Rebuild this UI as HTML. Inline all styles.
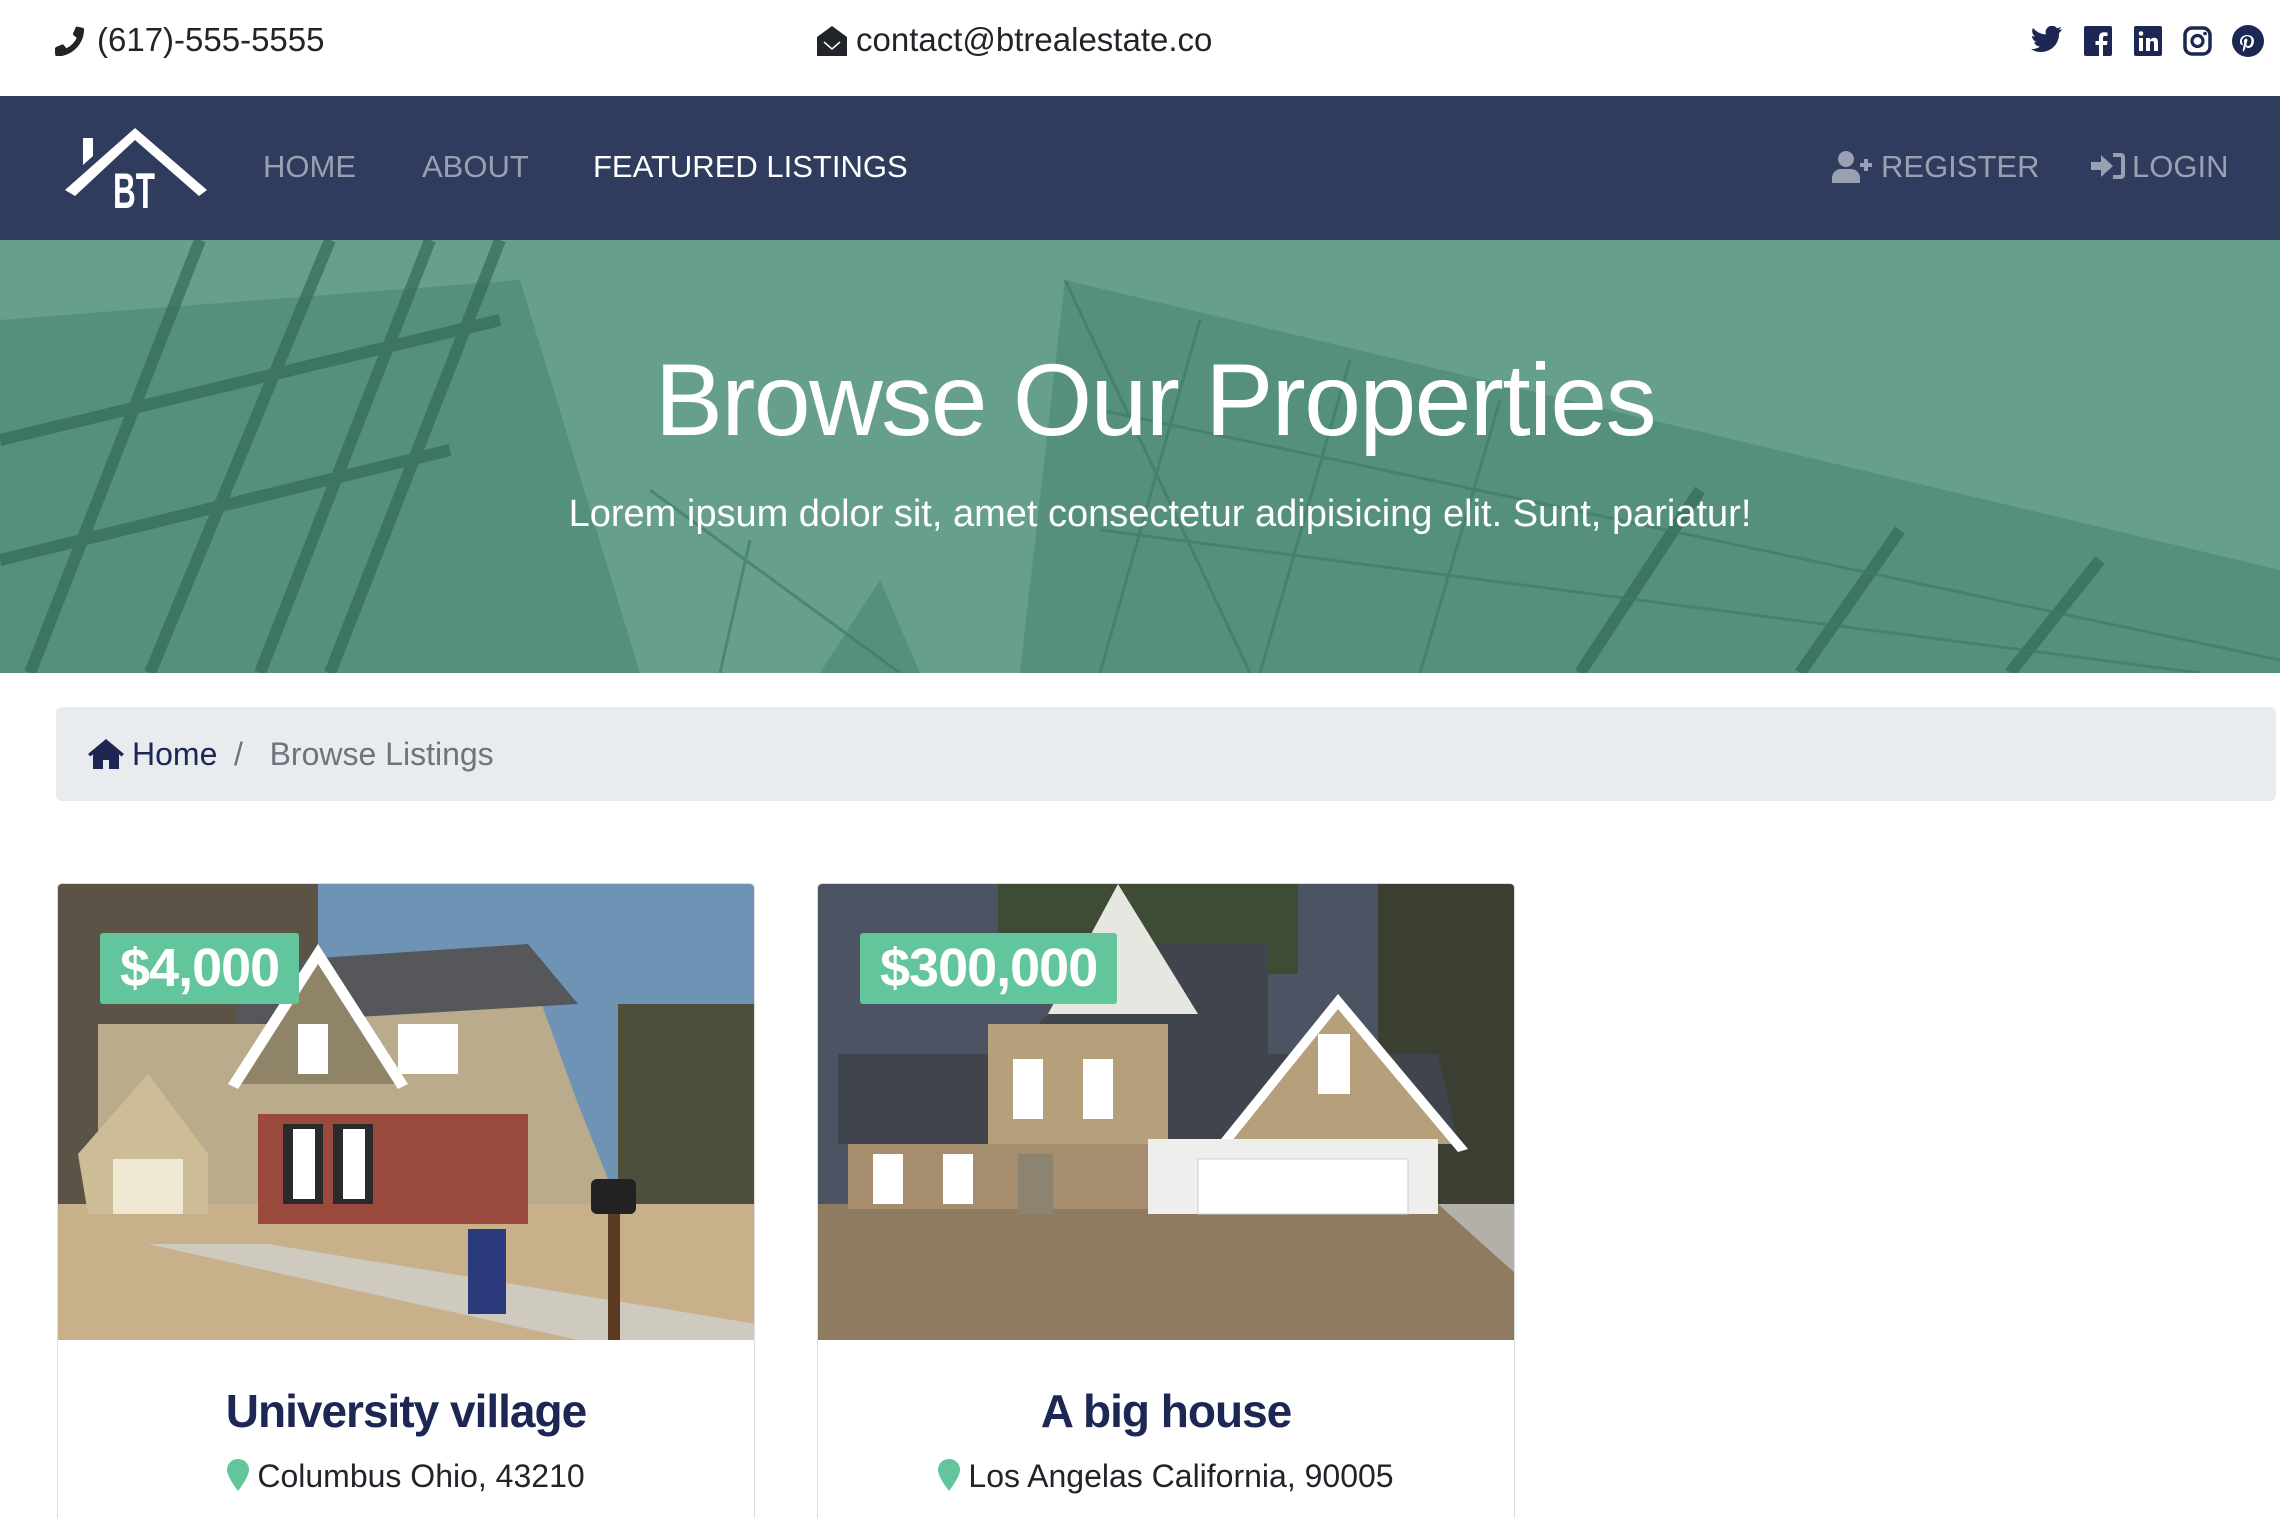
<!DOCTYPE html>
<html><head><meta charset="utf-8">
<style>
*{margin:0;padding:0;box-sizing:border-box}
html{width:2280px;height:1518px;overflow:hidden}
body{width:2280px;height:1518px;overflow:hidden;background:#fff;font-family:"Liberation Sans",sans-serif;color:#212529;position:relative}
.abs{position:absolute}
.top{height:96px;top:0;left:0;width:2280px}
.top .t{font-size:33px;top:21px;color:#212529}
.nav{top:96px;left:0;width:2280px;height:144px;background:#2f3c5e}
.nav .l{font-size:31px;top:53px;color:#9aa0b1}
.hero{top:240px;left:0;width:2280px;height:433px;background:#67a08a;overflow:hidden}
.bc{left:56px;top:707px;width:2220px;height:94px;background:#e9ecef;border-radius:6px}
.card{width:698px;height:640px;border:1px solid #dcdcdc;border-radius:5px;top:883px;overflow:hidden;background:#fff}
.badge{left:42px;top:49px;height:71px;background:#63c59c;color:#fff;font-weight:bold;font-size:54px;padding:0 20px;line-height:71px;border-radius:3px;letter-spacing:-1px}
.ttl{width:100%;text-align:center;top:500px;font-size:46px;color:#1c2754;font-weight:bold;letter-spacing:-1px}
.loc{width:100%;text-align:center;top:574px;font-size:32px;color:#212529}
</style></head><body>
<div class="abs top">
 <svg class="abs" style="left:55px;top:26px" width="30" height="30" viewBox="0 0 512 512"><path fill="#212529" d="M497 361l-104-45a24 24 0 0 0-28 7l-46 56A371 371 0 0 1 141 202l56-46a24 24 0 0 0 7-28L159 24a24 24 0 0 0-28-14L35 32A24 24 0 0 0 16 56c0 256 208 464 464 464a24 24 0 0 0 24-19l22-96a24 24 0 0 0-14-28z" transform="translate(512 0) scale(-1 1)"/></svg>
 <div class="abs t" style="left:97px">(617)-555-5555</div>
 <svg class="abs" style="left:816px;top:25px" width="32" height="32" viewBox="0 0 32 32"><path d="M16 1 L31 12 V31 H1 V12 Z" fill="#212529"/><path d="M8 17 L16 24 L24 17" stroke="#fff" stroke-width="1.5" fill="none"/></svg>
 <div class="abs t" style="left:856px">contact@btrealestate.co</div>
 <svg class="abs" style="left:2031px;top:26px" width="32" height="28" viewBox="0 0 32 28"><path fill="#1c2754" d="M31 3c-1 .5-2 .8-3.5 1 1.3-.8 2-2 2.5-3.3-1.2.7-2.5 1.2-4 1.5A6.4 6.4 0 0 0 15 8.5 18 18 0 0 1 2 2c-2 3.5 0 7 2 8.5-1 0-2-.3-3-.8 0 3 2 5.6 5 6.3-1 .3-2 .3-3 .1 1 2.5 3 4.3 6 4.4A13 13 0 0 1 0 23a18 18 0 0 0 28-16c1.2-.9 2.3-2 3-4z"/></svg>
 <svg class="abs" style="left:2084px;top:26px" width="28" height="30" viewBox="0 0 28 30"><rect width="28" height="30" rx="2" fill="#1c2754"/><path d="M19 30V19h4l.5-4H19v-3c0-1 .4-2 2-2h2.5V6.5C23 6.4 21.5 6.3 20 6.3c-3.3 0-5 2-5 5.3V15h-3.5v4H15v11z" fill="#fff"/></svg>
 <svg class="abs" style="left:2134px;top:26px" width="28" height="30" viewBox="0 0 28 30"><rect width="28" height="30" rx="2" fill="#1c2754"/><rect x="5" y="12" width="4" height="13" fill="#fff"/><circle cx="7" cy="7.5" r="2.3" fill="#fff"/><path d="M12 12h4v2c1-1.5 2.5-2.3 4.3-2.3 3 0 3.7 2 3.7 5V25h-4v-7c0-1.7-.3-3-2-3s-2 1.3-2 3v7h-4z" fill="#fff"/></svg>
 <svg class="abs" style="left:2183px;top:26px" width="29" height="30" viewBox="0 0 29 30"><rect x="2" y="2" width="25" height="26" rx="7" fill="none" stroke="#1c2754" stroke-width="3.5"/><circle cx="14.5" cy="15" r="5.5" fill="none" stroke="#1c2754" stroke-width="3.2"/><circle cx="22" cy="7.5" r="1.8" fill="#1c2754"/></svg>
 <svg class="abs" style="left:2232px;top:25px" width="32" height="32" viewBox="0 0 32 32"><circle cx="16" cy="16" r="16" fill="#1c2754"/><path d="M14 20c-.6 3-1.3 5.5-3 7-.5-3.5.7-6 1.3-9-1-1.7.1-5 2.3-4.2 2.7 1-2.3 6.5 1 7.2 3.6.7 5-6.3 2.8-8.5-3.2-3.2-9.2-.1-8.4 4.6.2 1.1 1.3 1.5.5 3.1-2-.5-2.600-2-2.5-4.1.1-3.4 3.1-5.8 6.1-6.1 3.8-.4 7.3 1.4 7.8 4.9.6 4-1.7 8.4-5.7 8.1-1.1-.1-1.5-.6-2.2-1z" fill="#fff"/></svg>
</div>
<div class="abs nav">
 <svg class="abs" style="left:63px;top:32px" width="145" height="82" viewBox="0 0 145 82"><polygon points="2,62 72,0 144,62 136,68 72,12 12,68" fill="#fff"/><polygon points="20,10 30,10 30,28 20,37" fill="#fff"/><text x="50" y="80" fill="#fff" font-family="Liberation Sans Narrow,Liberation Sans,sans-serif" font-weight="bold" font-size="50" transform="scale(1,1)" textLength="42" lengthAdjust="spacingAndGlyphs">BT</text></svg>
 <div class="abs l" style="left:263px">HOME</div>
 <div class="abs l" style="left:422px">ABOUT</div>
 <div class="abs l" style="left:593px;color:#fff">FEATURED LISTINGS</div>
 <svg class="abs" style="left:1832px;top:55px" width="42" height="32" viewBox="0 0 42 32"><circle cx="14" cy="8" r="8" fill="#9aa0b1"/><path d="M0 32v-5c0-5 4-9 9-9h10c5 0 9 4 9 9v5z" fill="#9aa0b1"/><path d="M34 8v12M28 14h12" stroke="#9aa0b1" stroke-width="4"/></svg>
 <div class="abs l" style="left:1881px">REGISTER</div>
 <svg class="abs" style="left:2091px;top:56px" width="34" height="28" viewBox="0 0 34 28"><path d="M0 10h10V3l12 11-12 11v-7H0z" fill="#9aa0b1"/><path d="M22 3h8c1.5 0 2 1 2 2v18c0 1-.5 2-2 2h-8" stroke="#9aa0b1" stroke-width="4" fill="none"/></svg>
 <div class="abs l" style="left:2132px">LOGIN</div>
</div>
<div class="abs hero">
 <svg class="abs" style="left:0;top:0" width="2280" height="433" viewBox="0 0 2280 433">
  <g fill="#3f7c67" opacity="0.45">
   <polygon points="0,80 520,40 640,433 0,433"/>
   <polygon points="1065,40 2280,330 2280,433 1020,433"/>
   <polygon points="820,433 880,340 920,433"/>
  </g>
  <g stroke="#336b58" stroke-width="12" opacity="0.7">
   <line x1="200" y1="0" x2="30" y2="433"/><line x1="330" y1="0" x2="150" y2="433"/><line x1="430" y1="0" x2="260" y2="433"/><line x1="500" y1="0" x2="330" y2="433"/>
   <line x1="0" y1="200" x2="500" y2="80"/><line x1="0" y1="320" x2="450" y2="210"/>
   <line x1="1700" y1="250" x2="1580" y2="433"/><line x1="1900" y1="290" x2="1800" y2="433"/><line x1="2100" y1="320" x2="2010" y2="433"/>
  </g>
  <g stroke="#3f7c67" stroke-width="3" opacity="0.7">
   <line x1="1065" y1="40" x2="1250" y2="433"/><line x1="1200" y1="80" x2="1100" y2="433"/><line x1="1350" y1="120" x2="1260" y2="433"/><line x1="1500" y1="160" x2="1420" y2="433"/>
   <line x1="1100" y1="170" x2="2280" y2="420"/><line x1="1100" y1="290" x2="2200" y2="433"/>
   <line x1="650" y1="250" x2="900" y2="433"/><line x1="750" y1="300" x2="720" y2="433"/>
  </g>
 </svg>
 <div class="abs" style="width:100%;text-align:center;top:102px;font-size:102px;color:#fff;letter-spacing:-1.5px;padding-left:30px">Browse Our Properties</div>
 <div class="abs" style="width:100%;text-align:center;top:253px;font-size:38px;color:#fff;padding-left:40px">Lorem ipsum dolor sit, amet consectetur adipisicing elit. Sunt, pariatur!</div>
</div>
<div class="abs bc">
 <svg class="abs" style="left:32px;top:32px" width="36" height="30" viewBox="0 0 36 30"><path d="M18 0L0 15l2.5 2.5L5 15.3V30h10v-9h6v9h10V15.3l2.5 2.2L36 15z" fill="#1c2754"/></svg>
 <div class="abs" style="left:76px;top:29px;font-size:32px;color:#1c2754">Home</div>
 <div class="abs" style="left:178px;top:29px;font-size:32px;color:#6c757d">/&nbsp;&nbsp;&nbsp;Browse Listings</div>
</div>

<div class="abs card" style="left:57px">
 <svg class="abs" style="left:0;top:0" width="698" height="456" viewBox="0 0 698 456">
  <rect width="698" height="456" fill="#6f93b5"/>
  <rect x="0" y="0" width="260" height="330" fill="#5b5345"/>
  <rect x="560" y="120" width="138" height="230" fill="#4e4f3a"/>
  <rect y="320" width="698" height="136" fill="#c8b08a"/>
  <polygon points="90,360 210,360 698,440 698,456 520,456" fill="#cfcac0"/>
  <polygon points="40,140 230,140 200,120 350,90 480,110 520,220 560,320 40,320" fill="#b9ab8c"/>
  <polygon points="170,80 470,60 520,120 180,140" fill="#55575b"/>
  <rect x="200" y="230" width="270" height="110" fill="#9a4a3c"/>
  <polygon points="260,70 340,200 180,200" fill="#8f8468"/>
  <polygon points="260,60 350,200 340,205 260,80 180,205 170,200" fill="#fff"/>
  <polygon points="20,270 90,190 150,270 150,330 30,330" fill="#cdbd96"/>
  <rect x="55" y="275" width="70" height="55" fill="#eee7d2"/>
  <rect x="225" y="240" width="40" height="80" fill="#2a2a2a"/><rect x="235" y="245" width="22" height="70" fill="#fff"/>
  <rect x="275" y="240" width="40" height="80" fill="#2a2a2a"/><rect x="285" y="245" width="22" height="70" fill="#fff"/>
  <rect x="240" y="140" width="30" height="50" fill="#fff"/><rect x="340" y="140" width="60" height="50" fill="#fff"/>
  <rect x="550" y="310" width="12" height="146" fill="#5a3b22"/><rect x="533" y="295" width="45" height="35" rx="6" fill="#222"/>
  <rect x="410" y="345" width="38" height="85" fill="#2b3a7a"/>
 </svg>
 <div class="abs badge">$4,000</div>
 <div class="abs ttl">University village</div>
 <div class="abs loc"><svg width="22" height="32" viewBox="0 0 22 32" style="vertical-align:-4px;margin-right:8px"><path d="M11 0C4.9 0 0 4.5 0 11c0 7 11 21 11 21s11-14 11-21C22 4.5 17.1 0 11 0z" fill="#63c59c"/></svg>Columbus Ohio, 43210</div>
</div>

<div class="abs card" style="left:817px">
 <svg class="abs" style="left:0;top:0" width="698" height="456" viewBox="0 0 698 456">
  <rect width="698" height="456" fill="#4c5464"/>
  <rect x="180" y="0" width="300" height="90" fill="#3e4b35"/>
  <rect x="560" y="0" width="138" height="320" fill="#3a3f32"/>
  <rect y="320" width="698" height="136" fill="#8f7b5f"/>
  <polygon points="620,320 698,320 698,390" fill="#b3b0aa"/>
  <polygon points="20,170 190,170 300,60 450,60 450,170 620,170 640,260 20,260" fill="#40444c"/>
  <polygon points="300,0 380,130 230,130" fill="#e7e7e2"/>
  <rect x="170" y="140" width="180" height="130" fill="#b6a07c"/>
  <polygon points="520,120 640,260 400,260" fill="#b6a07c"/>
  <polygon points="520,110 650,265 640,268 520,125 405,268 395,265" fill="#fff"/>
  <rect x="30" y="260" width="300" height="65" fill="#a68d6e"/>
  <rect x="330" y="255" width="290" height="75" fill="#eeeeec"/>
  <rect x="380" y="275" width="210" height="55" fill="#fff" stroke="#ccc"/>
  <rect x="195" y="175" width="30" height="60" fill="#fff"/><rect x="265" y="175" width="30" height="60" fill="#fff"/><rect x="500" y="150" width="32" height="60" fill="#fff"/>
  <rect x="55" y="270" width="30" height="50" fill="#fff"/><rect x="125" y="270" width="30" height="50" fill="#fff"/>
  <rect x="200" y="270" width="35" height="60" fill="#8c8370"/>
 </svg>
 <div class="abs badge">$300,000</div>
 <div class="abs ttl">A big house</div>
 <div class="abs loc"><svg width="22" height="32" viewBox="0 0 22 32" style="vertical-align:-4px;margin-right:8px"><path d="M11 0C4.9 0 0 4.5 0 11c0 7 11 21 11 21s11-14 11-21C22 4.5 17.1 0 11 0z" fill="#63c59c"/></svg>Los Angelas California, 90005</div>
</div>
</body></html>
